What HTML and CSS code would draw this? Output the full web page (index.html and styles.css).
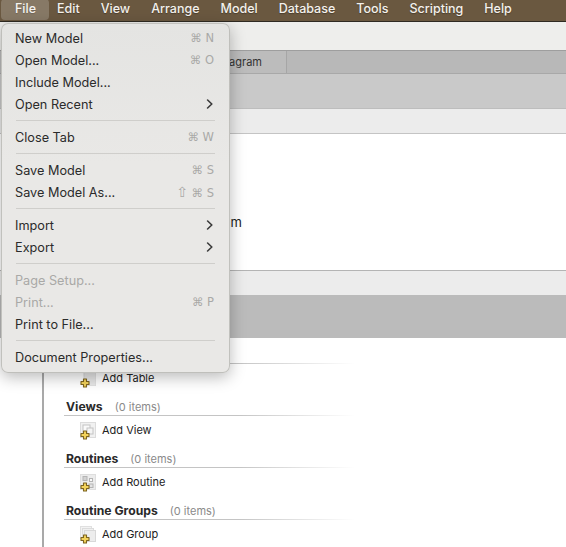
FILE: index.html
```html
<!DOCTYPE html>
<html lang="en">
<head>
<meta charset="utf-8">
<title>Model</title>
<link rel="stylesheet" href="styles.css">
</head>
<body>
<svg class="defs" width="0" height="0" aria-hidden="true">
  <defs>
    <symbol id="plus" viewBox="0 0 10 10">
      <path d="M3.5 1h3v2.5H9v3H6.5V9h-3V6.5H1v-3h2.5z" fill="#f3d35c" stroke="#7d6420" stroke-width="1.1" stroke-linejoin="round"/>
    </symbol>
    <symbol id="chev" viewBox="0 0 8 10">
      <path d="M1.6 1l4.2 4-4.2 4" fill="none" stroke="#3a3a3a" stroke-width="1.6" stroke-linecap="round" stroke-linejoin="round"/>
    </symbol>
  </defs>
</svg>

<header class="menubar">
  <span class="menubar-item is-open">File</span>
  <span class="menubar-item">Edit</span>
  <span class="menubar-item">View</span>
  <span class="menubar-item">Arrange</span>
  <span class="menubar-item">Model</span>
  <span class="menubar-item">Database</span>
  <span class="menubar-item">Tools</span>
  <span class="menubar-item">Scripting</span>
  <span class="menubar-item">Help</span>
</header>

<div class="toolbar"></div>
<div class="tabs"><div class="tab">EER Diagram</div></div>
<div class="band-grey"></div>
<div class="band-light"></div>
<div class="diagrams"><span class="diagram-label">Add Diagram</span></div>
<div class="band-light band-lined"></div>
<div class="band-dark"></div>

<main class="panel">
  <section class="group">
    <div class="group-head"><span class="group-title">Tables</span><span class="group-count">(0 items)</span></div>
    <div class="add-row">
      <span class="tile">
        <svg class="tile-art" viewBox="0 0 16 16"><rect x="4" y="1" width="12" height="15" fill="#e7e7e7" stroke="#d8d8d8"/></svg>
        <svg class="tile-plus"><use href="#plus"/></svg>
      </span>
      <span>Add Table</span>
    </div>
  </section>
  <section class="group">
    <div class="group-head"><span class="group-title">Views</span><span class="group-count">(0 items)</span></div>
    <div class="add-row">
      <span class="tile">
        <svg class="tile-art" viewBox="0 0 16 16"><rect x="0.5" y="0.5" width="15" height="15" fill="#f1f1f1" stroke="#dcdcdc"/><rect x="3" y="3" width="7" height="7" fill="#fafafa" stroke="#c4c4c4"/><rect x="7" y="6" width="6" height="6" fill="#f4f4f4" stroke="#c4c4c4"/></svg>
        <svg class="tile-plus"><use href="#plus"/></svg>
      </span>
      <span>Add View</span>
    </div>
  </section>
  <section class="group">
    <div class="group-head"><span class="group-title">Routines</span><span class="group-count">(0 items)</span></div>
    <div class="add-row">
      <span class="tile">
        <svg class="tile-art" viewBox="0 0 16 16"><rect x="0.5" y="0.5" width="15" height="15" fill="#ececec" stroke="#dedede"/><rect x="3" y="2.5" width="4" height="4" fill="#d2d2d2" stroke="#b4b4b4"/><rect x="9.5" y="4.5" width="3" height="3" fill="#fafafa" stroke="#b4b4b4"/><rect x="9" y="10" width="4" height="3.5" fill="#e4e4e4" stroke="#b4b4b4"/></svg>
        <svg class="tile-plus"><use href="#plus"/></svg>
      </span>
      <span>Add Routine</span>
    </div>
  </section>
  <section class="group">
    <div class="group-head"><span class="group-title">Routine Groups</span><span class="group-count">(0 items)</span></div>
    <div class="add-row">
      <span class="tile">
        <svg class="tile-art" viewBox="0 0 16 16"><rect x="0.5" y="0.5" width="11" height="12" fill="#f3f3f3" stroke="#e0e0e0"/><rect x="2.5" y="2.5" width="11" height="12" fill="#f0f0f0" stroke="#dcdcdc"/><rect x="4.5" y="4.5" width="11" height="11" fill="#ededed" stroke="#d8d8d8"/></svg>
        <svg class="tile-plus"><use href="#plus"/></svg>
      </span>
      <span>Add Group</span>
    </div>
  </section>
</main>

<nav class="menu">
  <div class="menu-row"><span>New Model</span><span class="keys">⌘ N</span></div>
  <div class="menu-row"><span>Open Model...</span><span class="keys">⌘ O</span></div>
  <div class="menu-row"><span>Include Model...</span></div>
  <div class="menu-row"><span>Open Recent</span><svg class="chev"><use href="#chev"/></svg></div>
  <div class="menu-sep"></div>
  <div class="menu-row"><span>Close Tab</span><span class="keys">⌘ W</span></div>
  <div class="menu-sep"></div>
  <div class="menu-row"><span>Save Model</span><span class="keys">⌘ S</span></div>
  <div class="menu-row"><span>Save Model As...</span><span class="keys"><span class="shift">⇧</span> ⌘ S</span></div>
  <div class="menu-sep"></div>
  <div class="menu-row"><span>Import</span><svg class="chev"><use href="#chev"/></svg></div>
  <div class="menu-row"><span>Export</span><svg class="chev"><use href="#chev"/></svg></div>
  <div class="menu-sep"></div>
  <div class="menu-row is-disabled"><span>Page Setup...</span></div>
  <div class="menu-row is-disabled"><span>Print...</span><span class="keys">⌘ P</span></div>
  <div class="menu-row"><span>Print to File...</span></div>
  <div class="menu-sep"></div>
  <div class="menu-row"><span>Document Properties...</span></div>
</nav>
</body>
</html>
```

FILE: styles.css
```css
* { box-sizing: border-box; }

html, body {
  margin: 0;
  padding: 0;
  height: 547px;
  overflow: hidden;
  background: #fff;
  font-family: Inter, "Liberation Sans", sans-serif;
  color: #222;
}

.defs { position: absolute; }

.menubar {
  height: 22px;
  display: flex;
  align-items: center;
  gap: 21px;
  padding: 0 0 4px 15px;
  background: #6a5840;
  border-bottom: 1px solid #2f2a22;
  color: #f4f1ec;
  font-size: 12.5px;
  font-weight: 500;
  text-shadow: 0 1px 1px rgba(0, 0, 0, .3);
}

.menubar-item { position: relative; white-space: nowrap; }

.is-open::before {
  content: "";
  position: absolute;
  left: -14px;
  right: -13px;
  top: -2px;
  height: 21px;
  border-radius: 4px;
  background: rgba(255, 255, 255, .2);
}

.toolbar { height: 28px; background: #eeeeec; }

.tabs {
  height: 24px;
  display: flex;
  background: #b8b8b8;
  border-top: 1px solid #9e9e9e;
  border-bottom: 1px solid #a8a8a8;
}

.tab {
  width: 287px;
  padding-right: 24px;
  text-align: right;
  font-size: 11px;
  line-height: 22px;
  color: #333;
  border-right: 1px solid #a6a6a6;
  background: #bcbcbc;
}

.band-grey {
  height: 35px;
  background: #c9c9c9;
  border-bottom: 1px solid #bdbdbd;
}

.band-light { height: 25px; background: #ececec; border-bottom: 1px solid #c4c4c4; }

.band-lined { border-top: 1px solid #b4b4b4; border-bottom: 0; }

.diagrams {
  height: 136px;
  padding: 80px 0 0 162px;
  font-size: 13px;
  line-height: 16px;
  color: #222;
}

.band-dark { height: 43px; background: #bbb; }

.panel {
  height: 209px;
  margin-left: 42px;
  padding-top: 8px;
  border-left: 2px solid #a9a9a9;
}

.group { height: 52px; padding-left: 20px; }

.group-head {
  width: 290px;
  height: 18px;
  padding-left: 2px;
  display: flex;
  align-items: center;
  gap: 12px;
  border-bottom: 1px solid;
  border-image: linear-gradient(to right, #c4c4c4 60%, rgba(196, 196, 196, 0)) 1;
}

.group-title { font-size: 12.2px; font-weight: 700; color: #2a2a2a; }

.group-count { font-size: 11px; color: #8a8a8a; }

.add-row {
  display: flex;
  align-items: center;
  gap: 6px;
  height: 28px;
  padding-left: 16px;
  font-size: 11px;
  color: #222;
}

.tile { position: relative; width: 16px; height: 16px; flex: none; }

.tile-art { display: block; width: 16px; height: 16px; }

.tile-plus { position: absolute; left: 0; bottom: -2px; width: 10px; height: 10px; }

.menu {
  position: absolute;
  left: 1px;
  top: 23px;
  width: 229px;
  height: 350px;
  padding: 3px 0 4px;
  border-radius: 7px;
  background: linear-gradient(#e4e4e2, #e9e8e6 40%);
  border: 1px solid rgba(160, 160, 155, .55);
  box-shadow: 0 4px 16px rgba(0, 0, 0, .28);
  font-size: 12.7px;
  color: #2b2b2b;
}

.menu-row {
  height: 22px;
  padding: 0 15px 0 13px;
  display: flex;
  align-items: center;
  justify-content: space-between;
  white-space: nowrap;
}

.menu-sep { height: 1px; margin: 5px 14px; background: #cfcecb; }

.is-disabled { color: #a9a9a7; }

.keys { color: #a9a9a7; font-family: "DejaVu Sans", Inter, sans-serif; font-size: 11.5px; }

.shift { font-size: 14px; line-height: 1; }

.chev { width: 8px; height: 10px; }
```
